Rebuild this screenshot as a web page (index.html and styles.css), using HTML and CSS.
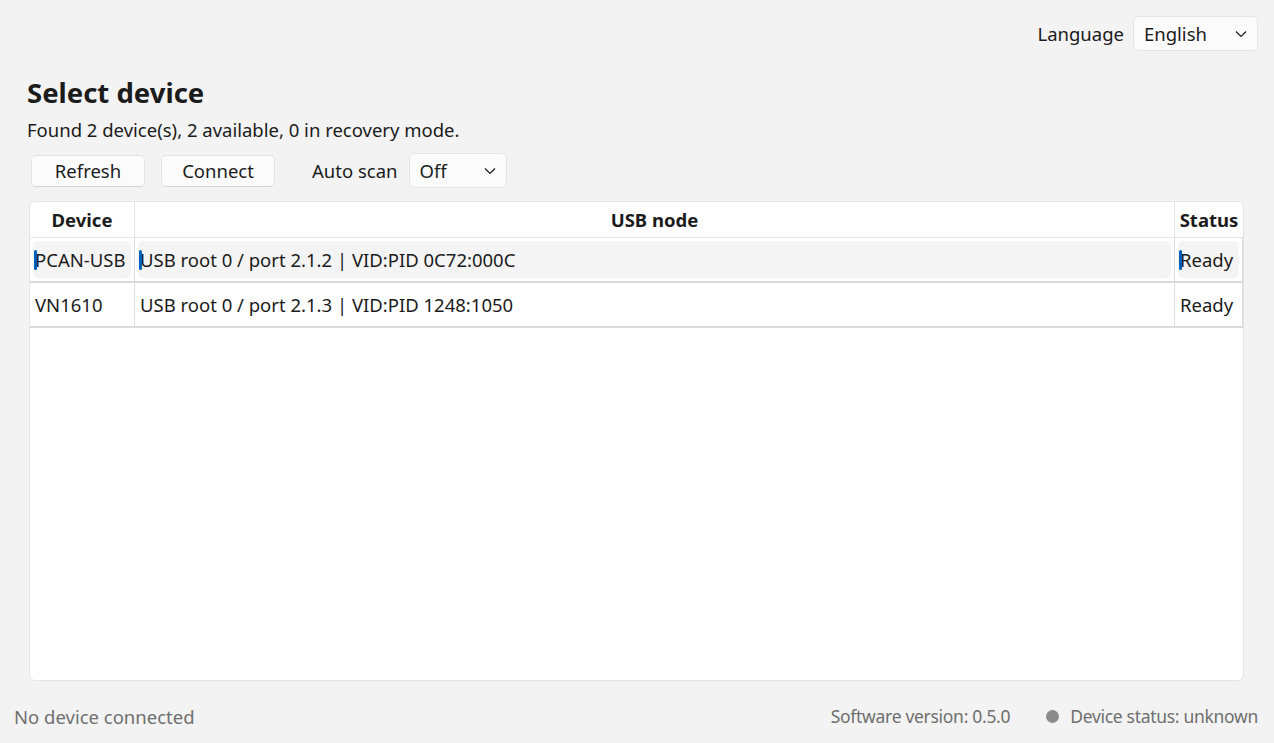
FILE: index.html
```html
<!DOCTYPE html>
<html lang="en">
<head>
    <meta charset="UTF-8">
    <meta name="viewport" content="width=device-width, initial-scale=1.0">
    <title>Select device</title>
    <link rel="stylesheet" href="styles.css">
</head>
<body>
    <div class="app">
        <div class="topbar">
            <span class="label">Language</span>
            <div class="combo combo-lang">
                <span>English</span>
                <svg class="chevron" width="12" height="8" viewBox="0 0 12 8"><path d="M1 1.5 L6 6.5 L11 1.5" fill="none" stroke="#1b1b1b" stroke-width="1.2"/></svg>
            </div>
        </div>

        <div class="page">
            <h1>Select device</h1>
            <p class="summary">Found 2 device(s), 2 available, 0 in recovery mode.</p>

            <div class="toolbar">
                <button type="button" class="btn">Refresh</button>
                <button type="button" class="btn">Connect</button>
                <span class="label scan-label">Auto scan</span>
                <div class="combo combo-scan">
                    <span>Off</span>
                    <svg class="chevron" width="12" height="8" viewBox="0 0 12 8"><path d="M1 1.5 L6 6.5 L11 1.5" fill="none" stroke="#1b1b1b" stroke-width="1.2"/></svg>
                </div>
            </div>

            <div class="grid-panel">
                <table class="devices">
                    <thead>
                        <tr>
                            <th class="col-device">Device</th>
                            <th class="col-node">USB node</th>
                            <th class="col-status">Status</th>
                        </tr>
                    </thead>
                    <tbody>
                        <tr class="selected">
                            <td><div class="cell">PCAN-USB</div></td>
                            <td><div class="cell">USB root 0 / port 2.1.2 | VID:PID 0C72:000C</div></td>
                            <td><div class="cell">Ready</div></td>
                        </tr>
                        <tr>
                            <td><div class="cell">VN1610</div></td>
                            <td><div class="cell">USB root 0 / port 2.1.3 | VID:PID 1248:1050</div></td>
                            <td><div class="cell">Ready</div></td>
                        </tr>
                    </tbody>
                </table>
            </div>
        </div>

        <div class="statusbar">
            <span class="conn">No device connected</span>
            <span class="version">Software version: 0.5.0</span>
            <span class="dev-status"><span class="dot"></span>Device status: unknown</span>
        </div>
    </div>
</body>
</html>
```

FILE: styles.css
```css
body {
    margin: 0;
    padding: 0;
    background-color: #f3f3f3;
    color: #1b1b1b;
    font-family: 'Noto Sans', 'Open Sans', sans-serif;
    font-size: 18.5px;
    height: 100vh;
    overflow: hidden;
}

.app {
    display: flex;
    flex-direction: column;
    height: 100vh;
}

.topbar {
    display: flex;
    justify-content: flex-end;
    align-items: center;
    gap: 9px;
    padding: 16px 16px 0 0;
}

.label {
    font-size: 18.5px;
}

.combo {
    display: flex;
    align-items: center;
    justify-content: space-between;
    box-sizing: border-box;
    height: 35px;
    padding: 0 10px 0 10px;
    background-color: #fbfbfb;
    border: 1px solid #e5e5e5;
    border-radius: 5px;
}

.combo-lang {
    width: 125px;
}

.combo-scan {
    width: 98px;
}

.chevron {
    display: block;
}

.page {
    flex: 1;
    display: flex;
    flex-direction: column;
    padding: 0 30px 0 27px;
    min-height: 0;
}

h1 {
    font-size: 27.5px;
    font-weight: 700;
    margin: 25px 0 0 0;
    line-height: 34px;
}

.summary {
    margin: 7px 0 0 0;
    line-height: 26px;
}

.toolbar {
    display: flex;
    align-items: center;
    margin: 10px 0 0 4px;
}

.btn {
    box-sizing: border-box;
    width: 114px;
    height: 32px;
    margin-right: 16px;
    font-family: inherit;
    font-size: 18.5px;
    color: #1b1b1b;
    background-color: #fbfbfb;
    border: 1px solid #e5e5e5;
    border-bottom-color: #d4d4d4;
    border-radius: 5px;
}

.scan-label {
    margin: 0 11px 0 21px;
}

.grid-panel {
    flex: 1;
    margin: 13px 0 0 2px;
    background-color: #ffffff;
    border: 1px solid #e5e5e5;
    border-radius: 6px;
    overflow: hidden;
}

.devices {
    border-collapse: collapse;
    width: 1214px;
}

.devices th {
    height: 35px;
    padding: 0;
    font-weight: 700;
    font-size: 18.5px;
    border-bottom: 1px solid #e5e5e5;
    border-right: 1px solid #e5e5e5;
}

.devices th.col-status {
    border-right: none;
}

.col-device {
    width: 104px;
}

.col-status {
    width: 68px;
}

.devices td {
    height: 43px;
    padding: 0;
    border-bottom: 2px solid #dadada;
    border-right: 1px solid #dcdcdc;
}

.devices td:last-child {
    border-right: 2px solid #dadada;
}

.cell {
    position: relative;
    display: flex;
    align-items: center;
    height: 37px;
    margin: 3px 3px;
    padding-left: 2px;
    border-radius: 5px;
    white-space: nowrap;
}

.selected .cell {
    background-color: #f4f4f4;
}

.selected .cell::before {
    content: '';
    position: absolute;
    left: 1px;
    top: 9px;
    width: 3px;
    height: 20px;
    border-radius: 2px;
    background-color: #005fb8;
}

.statusbar {
    display: flex;
    align-items: center;
    box-sizing: border-box;
    height: 62px;
    padding: 8px 16px 0 14px;
    color: #6f6f6f;
    font-size: 18.5px;
}

.conn {
    flex: 1;
}

.version,
.dev-status {
    font-size: 17.5px;
    letter-spacing: -0.3px;
}

.version {
    margin-right: 36px;
}

.dev-status {
    display: flex;
    align-items: center;
}

.dot {
    width: 13px;
    height: 13px;
    border-radius: 50%;
    background-color: #8c8c8c;
    margin-right: 11px;
}
```
